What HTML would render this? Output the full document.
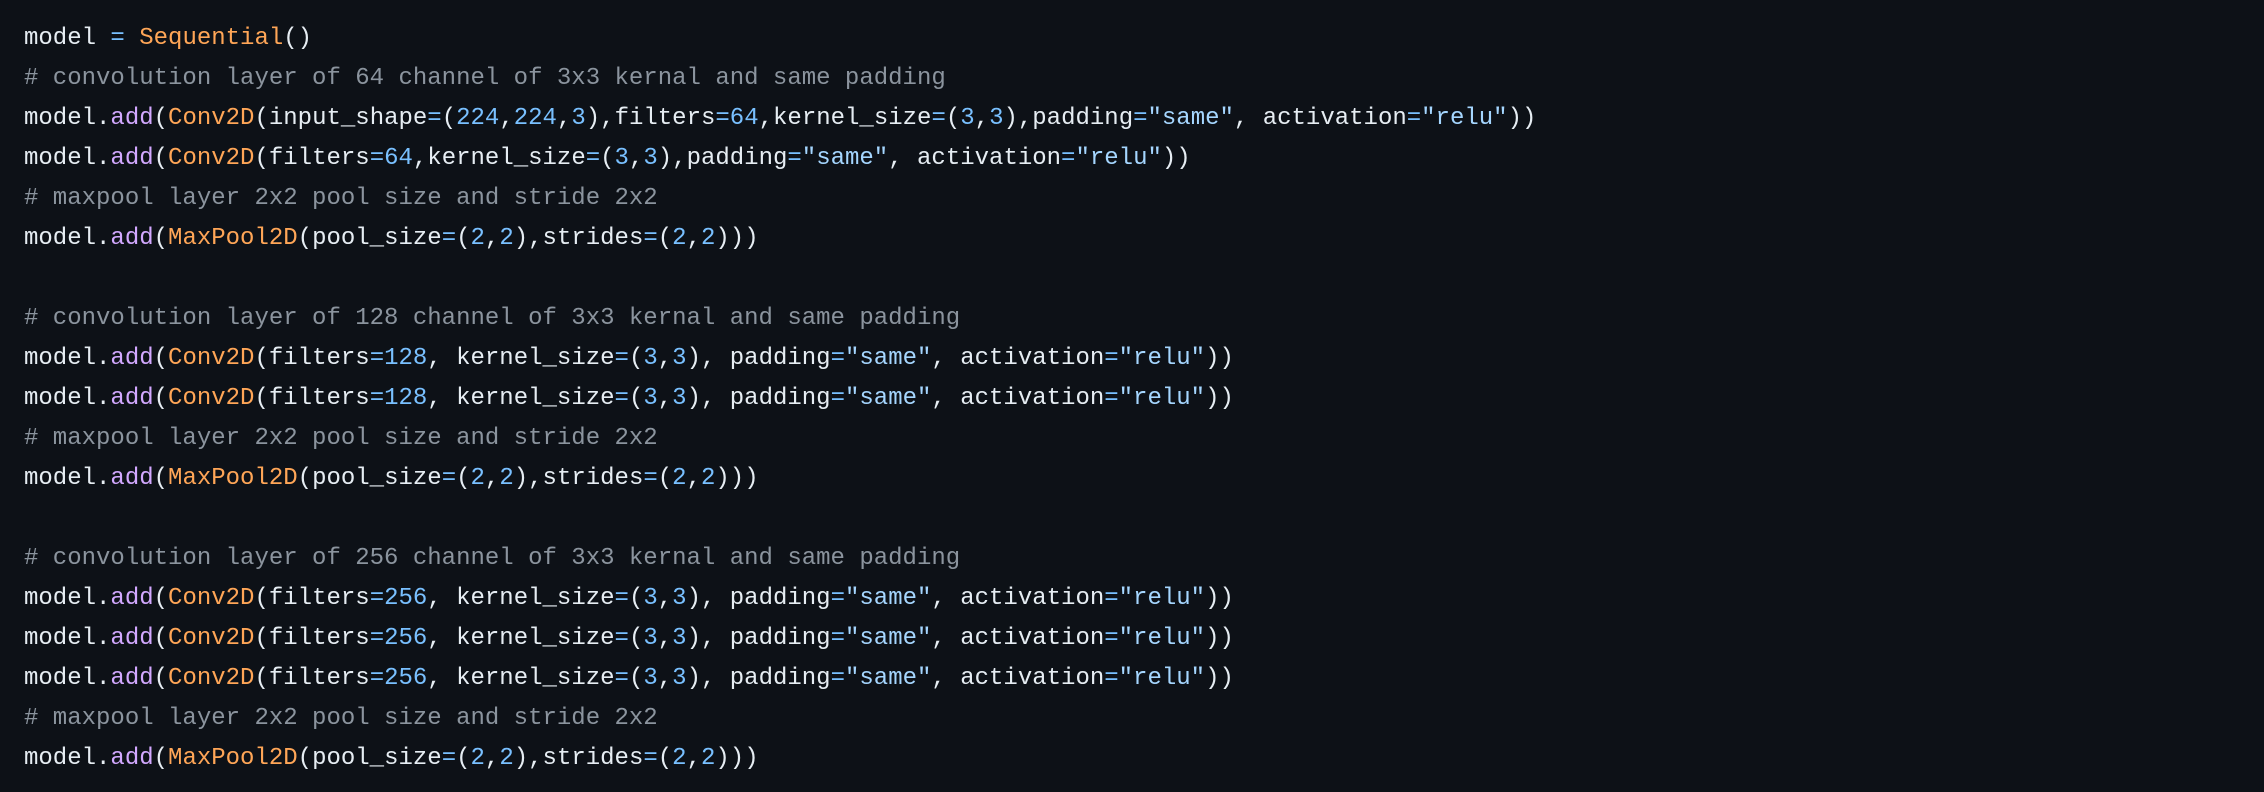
<!DOCTYPE html>
<html><head><meta charset="utf-8"><style>
html,body{margin:0;padding:0;background:#0d1117;width:2264px;height:792px;overflow:hidden}
pre{margin:0;position:absolute;left:24px;top:19px;font-family:"Liberation Mono",monospace;font-size:24px;line-height:40px;color:#e6edf3;white-space:pre}
.c{color:#8b949e}.p{color:#d2a8ff}.o{color:#ffa657}.b{color:#79c0ff}.s{color:#a5d6ff}
</style></head><body><pre>model <span class="b">=</span> <span class="o">Sequential</span>()
<span class="c"># convolution layer of 64 channel of 3x3 kernal and same padding</span>
model.<span class="p">add</span>(<span class="o">Conv2D</span>(input_shape<span class="b">=</span>(<span class="b">224</span>,<span class="b">224</span>,<span class="b">3</span>),filters<span class="b">=64</span>,kernel_size<span class="b">=</span>(<span class="b">3</span>,<span class="b">3</span>),padding<span class="b">=</span><span class="s">"same"</span>, activation<span class="b">=</span><span class="s">"relu"</span>))
model.<span class="p">add</span>(<span class="o">Conv2D</span>(filters<span class="b">=64</span>,kernel_size<span class="b">=</span>(<span class="b">3</span>,<span class="b">3</span>),padding<span class="b">=</span><span class="s">"same"</span>, activation<span class="b">=</span><span class="s">"relu"</span>))
<span class="c"># maxpool layer 2x2 pool size and stride 2x2</span>
model.<span class="p">add</span>(<span class="o">MaxPool2D</span>(pool_size<span class="b">=</span>(<span class="b">2</span>,<span class="b">2</span>),strides<span class="b">=</span>(<span class="b">2</span>,<span class="b">2</span>)))

<span class="c"># convolution layer of 128 channel of 3x3 kernal and same padding</span>
model.<span class="p">add</span>(<span class="o">Conv2D</span>(filters<span class="b">=128</span>, kernel_size<span class="b">=</span>(<span class="b">3</span>,<span class="b">3</span>), padding<span class="b">=</span><span class="s">"same"</span>, activation<span class="b">=</span><span class="s">"relu"</span>))
model.<span class="p">add</span>(<span class="o">Conv2D</span>(filters<span class="b">=128</span>, kernel_size<span class="b">=</span>(<span class="b">3</span>,<span class="b">3</span>), padding<span class="b">=</span><span class="s">"same"</span>, activation<span class="b">=</span><span class="s">"relu"</span>))
<span class="c"># maxpool layer 2x2 pool size and stride 2x2</span>
model.<span class="p">add</span>(<span class="o">MaxPool2D</span>(pool_size<span class="b">=</span>(<span class="b">2</span>,<span class="b">2</span>),strides<span class="b">=</span>(<span class="b">2</span>,<span class="b">2</span>)))

<span class="c"># convolution layer of 256 channel of 3x3 kernal and same padding</span>
model.<span class="p">add</span>(<span class="o">Conv2D</span>(filters<span class="b">=256</span>, kernel_size<span class="b">=</span>(<span class="b">3</span>,<span class="b">3</span>), padding<span class="b">=</span><span class="s">"same"</span>, activation<span class="b">=</span><span class="s">"relu"</span>))
model.<span class="p">add</span>(<span class="o">Conv2D</span>(filters<span class="b">=256</span>, kernel_size<span class="b">=</span>(<span class="b">3</span>,<span class="b">3</span>), padding<span class="b">=</span><span class="s">"same"</span>, activation<span class="b">=</span><span class="s">"relu"</span>))
model.<span class="p">add</span>(<span class="o">Conv2D</span>(filters<span class="b">=256</span>, kernel_size<span class="b">=</span>(<span class="b">3</span>,<span class="b">3</span>), padding<span class="b">=</span><span class="s">"same"</span>, activation<span class="b">=</span><span class="s">"relu"</span>))
<span class="c"># maxpool layer 2x2 pool size and stride 2x2</span>
model.<span class="p">add</span>(<span class="o">MaxPool2D</span>(pool_size<span class="b">=</span>(<span class="b">2</span>,<span class="b">2</span>),strides<span class="b">=</span>(<span class="b">2</span>,<span class="b">2</span>)))</pre></body></html>
